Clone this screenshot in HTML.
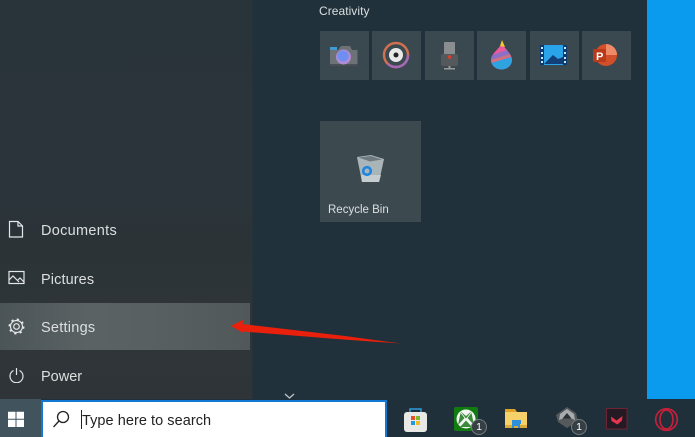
<!DOCTYPE html>
<html><head><meta charset="utf-8">
<style>
html,body{margin:0;padding:0}
body{width:695px;height:437px;overflow:hidden;position:relative;background:#21313b;font-family:"Liberation Sans","DejaVu Sans",sans-serif}
.a{position:absolute}
.t{position:absolute;color:#dcdfe0;font-size:14.5px;line-height:18px;white-space:nowrap}
.tile{position:absolute;top:31px;width:49px;height:49px;background:#3a4850}
.tile svg{position:absolute;left:0;top:0;filter:blur(.35px)}
svg.a{filter:blur(.25px)}
.b{position:absolute;top:419px;width:14px;height:14px;border-radius:50%;background:#363f44;border:1.5px solid #747c80;color:#fff;font-size:10.5px;line-height:14px;text-align:center}
</style></head>
<body>
<div class="a" style="left:0;top:0;width:252px;height:400px;background:linear-gradient(180deg,#29343a 0%,#2a343a 48%,#2c3337 60%,#2f3538 90%,#2e3437 100%)"></div>
<div class="a" style="left:252px;top:0;width:2px;height:400px;background:#253039"></div>
<div class="a" style="left:0;top:303px;width:250px;height:47px;background:linear-gradient(90deg,#4b5457 0%,#5a6264 35%,#586062 60%,#50585a 100%)"></div>
<div class="a" style="left:647px;top:0;width:48px;height:399px;background:#0a9bee"></div>

<div class="t" style="left:319px;top:3px;font-size:12px;line-height:16px;letter-spacing:.05px">Creativity</div>

<div class="tile" style="left:320px"><svg width="49" height="49" viewBox="0 0 49 49">
<rect x="10" y="16" width="7" height="5" fill="#3f9ad6"/><path d="M10 19h8l3-4h9l2 4h5.500v15H10z" fill="#6d7277"/><rect x="10" y="33" width="27.500" height="2" fill="#4a4f53"/><circle cx="23.500" cy="26" r="7.500" fill="#b08bd8"/><circle cx="23" cy="25" r="5.500" fill="#6f8ff0"/></svg></div>
<div class="tile" style="left:372px"><svg width="49" height="49" viewBox="0 0 49 49">
<circle cx="24" cy="24" r="12" fill="none" stroke="#d0704e" stroke-width="2.500"/><path d="M36 24a12 12 0 0 1-20 9" fill="none" stroke="#a468b8" stroke-width="2.500"/><circle cx="24" cy="24" r="7" fill="#e8e8e8"/><circle cx="24" cy="24" r="2.500" fill="#222"/></svg></div>
<div class="tile" style="left:425px"><svg width="49" height="49" viewBox="0 0 49 49">
<rect x="19" y="11" width="11" height="15" rx="1" fill="#8b8e90"/><rect x="16" y="23" width="17" height="12" rx="2" fill="#55595c"/><circle cx="24.500" cy="26" r="1.800" fill="#d8402a"/><rect x="23.500" y="35" width="2" height="2" fill="#999"/><rect x="19" y="37" width="11" height="1.500" fill="#999"/></svg></div>
<div class="tile" style="left:477px"><svg width="49" height="49" viewBox="0 0 49 49">
<clipPath id="d"><path d="M25 11c1 6 10 11 10 18a10.500 9.500 0 0 1-21 0c0-7 9-11 11-18z"/></clipPath>
<g clip-path="url(#d)"><rect x="10" y="8" width="30" height="32" fill="#e85a9c"/><path d="M10 26l26-9 2 7-28 7z" fill="#8b6fc8"/><path d="M10 33l28-8v16H10z" fill="#2fa3e0"/><path d="M10 30l26-8v3L10 33z" fill="#e8785e" opacity=".6"/></g><path d="M25 9l3 7-5-1z" fill="#f5c92f"/></svg></div>
<div class="tile" style="left:530px"><svg width="49" height="49" viewBox="0 0 49 49">
<rect x="10" y="14" width="27" height="20" fill="#29a3ea"/><path d="M14 33l9-9 5 4 5-2v7z" fill="#123f78"/><rect x="10" y="14" width="4" height="20" fill="#0c3a70"/><rect x="33" y="14" width="4" height="20" fill="#0c3a70"/><g fill="#cfe8f8"><rect x="11" y="16" width="2" height="2"/><rect x="11" y="21" width="2" height="2"/><rect x="11" y="26" width="2" height="2"/><rect x="11" y="30" width="2" height="2"/><rect x="34" y="16" width="2" height="2"/><rect x="34" y="21" width="2" height="2"/><rect x="34" y="26" width="2" height="2"/><rect x="34" y="30" width="2" height="2"/></g></svg></div>
<div class="tile" style="left:582px"><svg width="49" height="49" viewBox="0 0 49 49">
<circle cx="24" cy="24" r="11" fill="#d24f2a"/><path d="M24 13a11 11 0 0 1 11 11H24z" fill="#ee8a68"/><rect x="11" y="18" width="13" height="13" rx="1" fill="#b83a1a"/><text x="14" y="29" font-size="11" font-weight="bold" fill="#fff" font-family="Liberation Sans">P</text></svg></div>

<div class="a" style="left:320px;top:121px;width:101px;height:101px;background:#3c4a50"></div>
<svg class="a" style="left:354px;top:152px" width="34" height="34" viewBox="0 0 34 34">
<path d="M3 5L17 3 30 7 25 30 8 30z" fill="#aab5ba"/><path d="M4.500 5.500L17 4l11 3.500-12 2z" fill="#6f7a80"/><path d="M7 23h20l-2 7H8z" fill="#c6cdd0"/>
<circle cx="13" cy="19" r="3.800" fill="none" stroke="#1e86dc" stroke-width="2.600"/></svg>
<div class="t" style="left:328px;top:202px;font-size:11.500px;line-height:16px">Recycle Bin</div>

<svg class="a" style="left:8px;top:220px" width="16" height="18" viewBox="0 0 16 18" fill="none" stroke="#e4e6e7" stroke-width="1.200"><path d="M1.500 1.500H10L14.500 6V17H1.500z"/><path d="M10 1.500V6h4.500"/></svg>
<div class="t" style="left:41px;top:222px;letter-spacing:.3px">Documents</div>

<svg class="a" style="left:8px;top:270px" width="17" height="15" viewBox="0 0 17 15" fill="none" stroke="#e4e6e7" stroke-width="1.200"><rect x="1" y="1.500" width="15" height="12"/><path d="M1 10l4-4 6 6M10 10l2-2 4 4"/></svg>
<div class="t" style="left:41px;top:271px;letter-spacing:.1px">Pictures</div>

<svg class="a" style="left:8px;top:318px" width="17" height="17" viewBox="0 0 17 17" fill="none" stroke="#e4e6e7" stroke-width="1.200"><circle cx="8.500" cy="8.500" r="2.800"/><circle cx="8.500" cy="8.500" r="6"/><circle cx="8.500" cy="8.500" r="7" stroke-width="2" stroke-dasharray="2.200 3.300"/></svg>
<div class="t" style="left:41px;top:319px;letter-spacing:.25px">Settings</div>

<svg class="a" style="left:9px;top:367px" width="15" height="16" viewBox="0 0 15 16" fill="none" stroke="#e4e6e7" stroke-width="1.200"><path d="M4.500 3.500a6.500 6.500 0 1 0 6 0"/><path d="M7.500 1v7"/></svg>
<div class="t" style="left:41px;top:368px">Power</div>

<svg class="a" style="left:225px;top:315px;filter:none" width="180" height="35" viewBox="0 0 180 35">
<path d="M6 11L18 5 17.500 9 120 21 176 28.500 118 24.500 18 16.500 19 18.500 18.500 18z" fill="#e8200c"/><path d="M6 11L18 5 17 10 19 18z" fill="#e8200c"/></svg>

<div class="a" style="left:0;top:399px;width:695px;height:38px;background:#1f303a"></div>
<div class="a" style="left:0;top:399px;width:41px;height:38px;background:#41535c"></div>
<svg class="a" style="left:8px;top:411px;filter:none" width="17" height="17" viewBox="0 0 17 17" fill="#fff"><path d="M0 .8H7.500V7.800H0zM8.500 .8H16V7.800H8.500zM0 8.800H7.500V16H0zM8.500 8.800H16V16H8.500z"/></svg>

<div class="a" style="left:41px;top:400px;width:346px;height:37px;background:#fff;border:solid #1179d4;border-width:2px 2px 0 2px;box-sizing:border-box"></div>
<svg class="a" style="left:52px;top:410px" width="18" height="19" viewBox="0 0 18 19" fill="none" stroke="#222" stroke-width="1.300"><circle cx="11" cy="7" r="5.500"/><path d="M7 11l-5.500 6"/></svg>
<div class="a" style="left:81px;top:410px;width:1px;height:19px;background:#222"></div>
<div class="a" style="left:82px;top:412px;font-size:14.500px;line-height:18px;color:#222;white-space:nowrap;letter-spacing:.05px">Type here to search</div>

<svg class="a" style="left:403px;top:406px" width="25" height="27" viewBox="0 0 25 27">
<path d="M7 7V3h11v4" fill="none" stroke="#2f9be0" stroke-width="1.500"/><rect x="1" y="6" width="23" height="20" rx="3" fill="#e8e8e6"/><rect x="8" y="10" width="4" height="4" fill="#e8502a"/><rect x="13" y="10" width="4" height="4" fill="#7db92e"/><rect x="8" y="15" width="4" height="4" fill="#1f9be0"/><rect x="13" y="15" width="4" height="4" fill="#f5b81e"/></svg>

<svg class="a" style="left:454px;top:407px" width="25" height="25" viewBox="0 0 25 25">
<rect width="24" height="24" rx="2" fill="#107c10"/><circle cx="12" cy="12" r="9.500" fill="#f4f6f4"/><path d="M6 4l6 5 6-5-6 7.500zM4 18l6.500-7-4-5zM20 18l-6.500-7 4-5zM6 20l6-6.500 6 6.500z" fill="#3c8a3c"/></svg>
<div class="b" style="left:471px">1</div>

<svg class="a" style="left:505px;top:408px" width="23" height="23" viewBox="0 0 23 23">
<path d="M0 1h10l2 3H0z" fill="#e0a32a"/><rect x="0" y="4" width="22" height="16" fill="#f6d16a"/><rect x="0" y="17" width="22" height="3" fill="#d9a93a"/><path d="M7 20v-5h8v5h-2v-2H9v2z" fill="#2f8fd8"/><rect x="7" y="12" width="9" height="4" fill="#2f8fd8"/></svg>

<svg class="a" style="left:556px;top:406px" width="23" height="24" viewBox="0 0 23 24">
<path d="M11 1L20 7 22 15 11 22 2 16 0 9z" fill="#55595c"/><path d="M11 3L18 8l1 6-8-3-8 3 1-6z" fill="#a8acae"/><path d="M11 7l-4.500 5.500h9z" fill="#2c3134"/></svg>
<div class="b" style="left:571px">1</div>

<svg class="a" style="left:606px;top:408px" width="22" height="22" viewBox="0 0 22 22">
<rect x=".5" y=".5" width="20.500" height="20.500" fill="#231a24" stroke="#6e2334"/><path d="M5 8.500l5.500 4L16.500 8l-.5 4.500-4.500 4-6-3.500z" fill="#e8354e"/></svg>

<svg class="a" style="left:654px;top:407px" width="25" height="25" viewBox="0 0 25 25" fill="none" stroke="#c4203a" stroke-width="1.700">
<circle cx="12.500" cy="12.500" r="10.800"/><ellipse cx="12.500" cy="12.500" rx="6.500" ry="9.500"/></svg>

<svg class="a" style="left:284px;top:393px" width="11" height="6" viewBox="0 0 11 6" fill="none" stroke="#b9bfc2" stroke-width="1.400"><path d="M1 1l4.500 4L10 1"/></svg>
</body></html>
